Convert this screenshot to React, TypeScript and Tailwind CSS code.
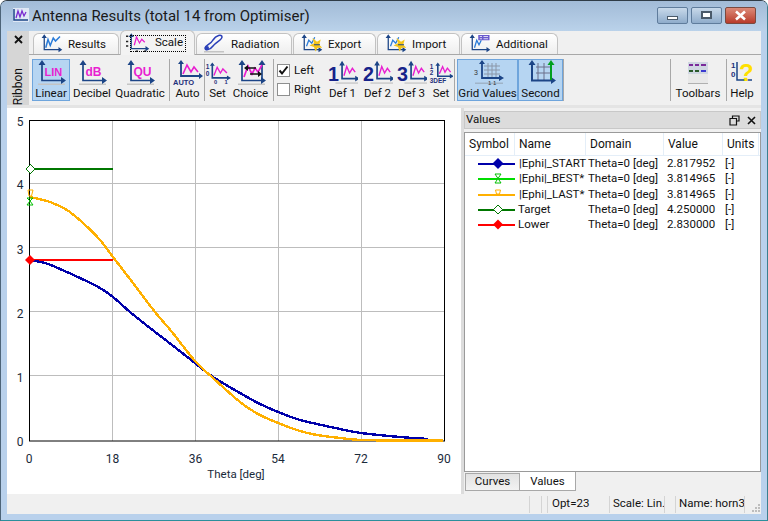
import React from "react";

const NAVY = "#1c4587";
const PINK = "#e81fd0";

function Axes({ children, shadow = true, right }: { children?: React.ReactNode; shadow?: boolean; right?: string }) {
  return (
    <>
      {shadow && <rect x="3" y="23.5" width="27" height="1.5" fill="#c4c4c4" />}
      <path d="M7 2.5V20.5H27" fill="none" stroke={NAVY} strokeWidth="1.7" />
      <path d="M7 0L3.5 5H10.5ZM31 20.5L26 17V24Z" fill={NAVY} />
      {right && (
        <>
          <path d="M27 3V20" stroke={right} strokeWidth="1.7" />
          <path d="M27 0L23.5 5H30.5Z" fill={right} />
        </>
      )}
      {children}
    </>
  );
}

function Ico({ w = 32, h = 26, vb = "0 0 32 26", children }: { w?: number; h?: number; vb?: string; children?: React.ReactNode }) {
  return (
    <svg width={w} height={h} viewBox={vb} className="block shrink-0">
      {children}
    </svg>
  );
}

const Wave = ({ c = PINK }: { c?: string }) => (
  <path d="M9 17L13 6L17 14L20 8L23 12L27 5" fill="none" stroke={c} strokeWidth="1.7" />
);

function TextIcon({ label, size = 11 }: { label: string; size?: number }) {
  return (
    <Ico>
      <Axes />
      <text x="9.5" y="15.5" fontSize={size} fontWeight="700" fill={PINK} fontFamily="Liberation Sans, sans-serif">
        {label}
      </text>
    </Ico>
  );
}

function DefIcon({ n }: { n: string }) {
  return (
    <Ico w={30} h={26} vb="-2 0 32 26">
      <g transform="translate(6 0)">
        <path d="M7 2.5V19H22" fill="none" stroke={NAVY} strokeWidth="1.8" />
        <path d="M7 0L4 5H10ZM26 19L21 16V22Z" fill={NAVY} />
        <path d="M9 16L12 6L15 13L18 8L21 12" fill="none" stroke={PINK} strokeWidth="1.5" />
      </g>
      <rect x="6" y="23" width="24" height="1.5" fill="#c8c8c8" />
      <text x="-2" y="22" fontSize="21" fontWeight="700" fill="#16238a" fontFamily="Liberation Sans, sans-serif">
        {n}
      </text>
    </Ico>
  );
}

function TabIcon({ kind }: { kind: string }) {
  if (kind === "radiation") {
    return (
      <Ico w={24} h={20} vb="0 0 24 20">
        <rect x="2" y="17" width="20" height="1.5" fill="#c4c4c4" />
        <path d="M3 14C3 17 8 16 11 12C14 8 20 6 20 3C20 0 14 1 11 6C9 10 4 11 3 14Z" fill="none" stroke="#2a3fb8" strokeWidth="1.5" />
        <circle cx="5" cy="14" r="2" fill="#2a3fb8" />
      </Ico>
    );
  }
  return (
    <Ico w={24} h={20} vb="0 0 32 26">
      <Axes shadow={false}>
        {kind === "results" && <path d="M9 18L12 7L15 15L19 5L22 9L28 3" fill="none" stroke="#2a7bd8" strokeWidth="2" />}
        {kind === "scale" && (
          <>
            <path d="M11 16L14 5L18 13L21 8L25 12" fill="none" stroke={PINK} strokeWidth="1.7" />
            <path d="M0 4H3M0 11H3M0 17H3M13 24H16M24 24H27" stroke="#222" strokeWidth="2" />
          </>
        )}
        {(kind === "export" || kind === "import") && (
          <>
            <path d="M10 16L13 8L17 12L21 4" fill="none" stroke="#2a7bd8" strokeWidth="1.7" />
            <path d="M18 5L24 10L29 7L27 14L31 18L25 18L22 23L20 17L14 15L20 12Z" fill="#f5c518" />
            <path d="M20 14H28" stroke={NAVY} strokeWidth="1.6" />
          </>
        )}
        {kind === "additional" && (
          <>
            <path d="M10 18L13 8L16 14L19 8" fill="none" stroke="#2a7bd8" strokeWidth="1.7" />
            <rect x="15" y="1" width="15" height="7" fill="#6a5acd" />
            <path d="M17 3H20M17 6H20M22 3H28M22 6H28" stroke="#fff" strokeWidth="1" />
          </>
        )}
      </Axes>
    </Ico>
  );
}

function Tab({ label, kind, className, active }: { label: string; kind: string; className: string; active?: boolean }) {
  return (
    <div
      className={`${className} flex items-center rounded-t-[6px] border border-[#c2c2c2] pl-[5px] ${
        active
          ? "h-[25px] -mb-px mr-px border-b-0 bg-[#f3f3f3] relative z-10"
          : "h-[21px] mr-px border-b-0 bg-gradient-to-b from-white to-[#eeeeee]"
      }`}
    >
      <TabIcon kind={kind} />
      {active ? (
        <span className="ml-[4px] flex h-[17px] items-center border border-dotted border-black pl-[24px] pr-[2px] -translate-x-[24px] -mr-[24px]">
          {label}
        </span>
      ) : (
        <span className="ml-[5px] pt-[2px]">{label}</span>
      )}
    </div>
  );
}

function Btn({ label, className, active, children }: { label: string; className: string; active?: boolean; children?: React.ReactNode }) {
  return (
    <div
      className={`${className} flex h-[42px] shrink-0 flex-col items-center justify-between border pb-[1px] ${
        active ? "border-[#6fa5dc] bg-[#b6d5f2]" : "border-transparent"
      }`}
    >
      <div className="flex h-[26px] items-start justify-center">{children}</div>
      <span className="whitespace-nowrap leading-[14px]">{label}</span>
    </div>
  );
}

const Sep = ({ className }: { className: string }) => (
  <div className={`${className} h-[42px] w-[2px] shrink-0 border-l border-[#a8a8a8] bg-[#f0f0f0]`} />
);

function Check({ label, checked }: { label: string; checked?: boolean }) {
  return (
    <div className="flex h-[19px] items-center">
      <div className="flex h-[13px] w-[13px] items-center justify-center border border-[#8e8f8f] bg-white">
        {checked && (
          <svg width="11" height="11" viewBox="0 0 11 11">
            <path d="M1.5 5.5L4 8.5L9.5 1.5" fill="none" stroke="#111" strokeWidth="2" />
          </svg>
        )}
      </div>
      <span className="ml-[4px]">{label}</span>
    </div>
  );
}

const blue: [number, number][] = [[29,260],[45,263],[60,269],[80,278],[100,288],[113,297],[130,312],[150,328],[172,345],[195,363],[213,377],[240,393],[258,403],[278,412],[300,420],[317,424],[340,429],[361,433],[400,437],[428,439]];
const yellow: [number, number][] = [[30,197],[50,202],[67,210],[83,223],[100,240],[113,257],[133,283],[155,312],[172,332],[195,361],[213,378],[240,402],[258,414],[278,423],[300,431],[317,435],[340,438],[361,440],[400,440.5],[443,440.5]];

function smooth(p: [number, number][]) {
  let d = `M${p[0][0]} ${p[0][1]}`;
  for (let i = 0; i < p.length - 1; i++) {
    const a = p[Math.max(i - 1, 0)];
    const b = p[i];
    const c = p[i + 1];
    const e = p[Math.min(i + 2, p.length - 1)];
    d += `C${b[0] + (c[0] - a[0]) / 6} ${b[1] + (c[1] - a[1]) / 6} ${c[0] - (e[0] - b[0]) / 6} ${c[1] - (e[1] - b[1]) / 6} ${c[0]} ${c[1]}`;
  }
  return d;
}

const SANS = "Roboto, sans-serif";

function Chart() {
  const t = { fontSize: 12, fill: "#1a2a3a", fontFamily: SANS, textAnchor: "middle" as const };
  return (
    <svg width="454" height="386" viewBox="7 108 454 386" className="block">
      {[112.5, 195.5, 278.5, 361.5].map((x) => (
        <path key={x} d={`M${x} 120V441`} stroke="#bdbdbd" strokeWidth="1" />
      ))}
      {[183.5, 247.5, 311.5, 375.5].map((y) => (
        <path key={y} d={`M29 ${y}H444`} stroke="#bdbdbd" strokeWidth="1" />
      ))}
      <rect x="29.5" y="120.5" width="415" height="320.5" fill="none" stroke="#000" strokeWidth="1" />
      <path d="M30 169H113" stroke="#007700" strokeWidth="2" shapeRendering="crispEdges" />
      <path d="M30 260H113" stroke="#ff0000" strokeWidth="2" shapeRendering="crispEdges" />
      <path d={smooth(blue)} fill="none" stroke="#0000aa" strokeWidth="2.4" shapeRendering="crispEdges" />
      <path d={smooth(yellow)} fill="none" stroke="#ffb000" strokeWidth="2.4" shapeRendering="crispEdges" />
      <path d="M30.5 164.5L35 169L30.5 173.5L26 169Z" fill="#fff" stroke="#007700" shapeRendering="crispEdges" />
      <path d="M30 255L35 260L30 265L25 260Z" fill="#ff0000" />
      <path d="M27 198L33 198L30 201L33 205L27 205L30 201Z" fill="none" stroke="#00c000" />
      <path d="M28 190L33 190L31.5 196L29 196Z" fill="none" stroke="#ffb000" />
      {["5", "4", "3", "2", "1", "0"].map((s, i) => (
        <text key={s} x="20" y={126 + i * 64 - (i === 1 ? 1 : 0)} {...t}>
          {s}
        </text>
      ))}
      {[
        ["0", 29],
        ["18", 112.5],
        ["36", 195.5],
        ["54", 278],
        ["72", 361],
        ["90", 444],
      ].map(([s, x]) => (
        <text key={s} x={x} y="463" {...t}>
          {s}
        </text>
      ))}
      <text x="236" y="478" {...t} fontSize={11.5}>
        Theta [deg]
      </text>
    </svg>
  );
}

function Sym({ color, marker }: { color: string; marker: React.ReactNode }) {
  return (
    <svg width="37" height="15" viewBox="0 0 37 15" className="block shrink-0 ml-[13px]">
      <path d="M0 7.5H37" stroke={color} strokeWidth="2" shapeRendering="crispEdges" />
      {marker}
    </svg>
  );
}

const rows: { c: string; m: React.ReactNode; name: string; nameClass: string; val: string }[] = [
  { c: "#0000aa", m: <path d="M20 2L25.5 7.5L20 13L14.5 7.5Z" fill="#0000aa" />, name: "|Ephi|_START", nameClass: "w-[70px] pl-[4px]", val: "2.817952" },
  { c: "#00dd00", m: <path d="M17 3H23L20 7.5L23 12H17L20 7.5Z" fill="#fff" stroke="#00c000" />, name: "|Ephi|_BEST*", nameClass: "w-[70px] pl-[4px]", val: "3.814965" },
  { c: "#ffb000", m: <path d="M17.5 3L22.5 3L21.5 7H18.5Z" fill="#fff" stroke="#ffb000" />, name: "|Ephi|_LAST*", nameClass: "w-[70px] pl-[4px]", val: "3.814965" },
  { c: "#007700", m: <path d="M20 3L24.5 7.5L20 12L15.5 7.5Z" fill="#fff" stroke="#007700" />, name: "Target", nameClass: "w-[70px] pl-[3px]", val: "4.250000" },
  { c: "#ff0000", m: <path d="M20 2.5L25 7.5L20 12.5L15 7.5Z" fill="#ff0000" />, name: "Lower", nameClass: "w-[70px] pl-[3px]", val: "2.830000" },
];

const StatusSep = ({ className }: { className: string }) => <div className={`${className} h-[17px] w-px shrink-0 bg-[#d4d4d4]`} />;

export default function App() {
  return (
    <div
      className="flex h-[521px] w-[768px] flex-col overflow-hidden rounded-t-[7px] border border-b-[#2b8f9c] border-l-[#4d6478] border-r-[#3b7f8f] border-t-[#2f3b46] bg-[#b9d1ec] text-[11.5px] text-[#111]"
      style={{ fontFamily: SANS }}
    >
      {/* Title bar */}
      <div className="flex h-[30px] shrink-0 items-center bg-gradient-to-b from-[#a2bbd7] to-[#bad2ea] pl-[12px] pr-[11px]">
        <svg width="16" height="14" viewBox="0 0 16 14" className="block shrink-0 -translate-y-[1px]">
          <rect width="16" height="14" fill="#dfe8f5" />
          <path d="M1 1V12H15" fill="none" stroke={NAVY} strokeWidth="1.5" />
          <path d="M3 10L5 3L7 9L9 3L11 8L13 4" fill="none" stroke="#7a2bd0" strokeWidth="1.3" />
        </svg>
        <span className="ml-[3px] text-[15px] leading-[20px] text-[#1a1a1a]">Antenna Results (total 14 from Optimiser)</span>
        <div className="ml-auto flex gap-[3px] -translate-y-[1px]">
          <div className="flex h-[17px] w-[31px] items-end justify-center rounded-[2px] border border-[#5f7c9c] bg-gradient-to-b from-[#c8d9ea] to-[#8faccb] pb-[3px]">
            <div className="h-[4px] w-[11px] border border-[#4a5a6a] bg-white" />
          </div>
          <div className="flex h-[17px] w-[31px] items-center justify-center rounded-[2px] border border-[#5f7c9c] bg-gradient-to-b from-[#c8d9ea] to-[#8faccb]">
            <div className="h-[8px] w-[11px] border-2 border-[#4a5a6a] bg-white" />
          </div>
          <div className="flex h-[17px] w-[31px] items-center justify-center rounded-[2px] border border-[#7a4a40] bg-gradient-to-b from-[#dc8a78] to-[#b8392a]">
            <svg width="13" height="11" viewBox="0 0 13 11">
              <path d="M2 1.5L11 9.5M11 1.5L2 9.5" stroke="#fff" strokeWidth="2.6" />
            </svg>
          </div>
        </div>
      </div>

      {/* Client area */}
      <div className="ml-[6px] mr-[6px] flex h-[483px] shrink-0 flex-col bg-[#f0f0f0]">
        {/* Ribbon */}
        <div className="flex h-[74px] shrink-0">
          <div className="relative flex w-[22px] shrink-0 flex-col items-center bg-[#d6d6d6]">
            <svg width="9" height="9" viewBox="0 0 9 9" className="mt-[4px] block">
              <path d="M1 1L8 8M8 1L1 8" stroke="#111" strokeWidth="1.8" />
            </svg>
            <span className="absolute bottom-[0px] left-[3px] origin-center text-[12px] [writing-mode:vertical-rl] rotate-180 leading-[16px]">Ribbon</span>
          </div>
          <div className="flex min-w-0 flex-1 flex-col">
            <div className="relative flex h-[24px] shrink-0 items-end border-b border-[#a8a8a8] pl-[4px]">
              <Tab label="Results" kind="results" className="w-[86px] mr-px" />
              <Tab label="Scale" kind="scale" className="w-[75px]" active />
              <Tab label="Radiation" kind="radiation" className="w-[96px]" />
              <Tab label="Export" kind="export" className="w-[83px]" />
              <Tab label="Import" kind="import" className="w-[83px]" />
              <Tab label="Additional" kind="additional" className="w-[97px]" />
            </div>
            <div className="flex flex-1 items-start pl-[3px] pt-[4px]">
              <Btn label="Linear" className="w-[38px]" active>
                <TextIcon label="LIN" size={11} />
              </Btn>
              <Btn label="Decibel" className="ml-[2px] w-[40px]">
                <TextIcon label="dB" size={12} />
              </Btn>
              <Btn label="Quadratic" className="ml-[2px] w-[52px]">
                <TextIcon label="QU" size={12} />
              </Btn>
              <Sep className="ml-[3px]" />
              <Btn label="Auto" className="ml-[1px] w-[31px]">
                <Ico>
                  <path d="M9 3V16H29" fill="none" stroke={NAVY} strokeWidth="1.8" />
                  <path d="M9 0L6 4H12ZM31 16L27 13V19Z" fill={NAVY} />
                  <path d="M11 14L15 5L19 12L22 7L26 12" fill="none" stroke={PINK} strokeWidth="1.6" />
                  <text x="1" y="25" fontSize="7.5" fontWeight="700" fill="#1f2f7a" fontFamily="Liberation Sans, sans-serif">AUTO</text>
                </Ico>
              </Btn>
              <Sep className="ml-[1px]" />
              <Btn label="Set" className="ml-[0px] w-[23px]">
                <Ico w={26} h={26} vb="0 0 32 26">
                  <path d="M9 2V19H29" fill="none" stroke={NAVY} strokeWidth="2" />
                  <path d="M9 0L6 4H12ZM32 19L27 16V22Z" fill={NAVY} />
                  <path d="M11 16L15 6L19 13L22 8L27 13" fill="none" stroke={PINK} strokeWidth="1.7" />
                  <text x="1" y="8" fontSize="8" fontWeight="700" fill="#1f2f7a" fontFamily="Liberation Sans, sans-serif">1</text>
                  <text x="1" y="17" fontSize="8" fontWeight="700" fill="#1f2f7a" fontFamily="Liberation Sans, sans-serif">0</text>
                  <text x="11" y="26" fontSize="7" fontWeight="700" fill="#1f2f7a" fontFamily="Liberation Sans, sans-serif">0</text>
                  <text x="24" y="26" fontSize="7" fontWeight="700" fill="#1f2f7a" fontFamily="Liberation Sans, sans-serif">1</text>
                </Ico>
              </Btn>
              <Btn label="Choice" className="ml-[2px] w-[39px]">
                <Ico>
                  <Axes right={NAVY}>
                    <Wave />
                    <path d="M11 8H21M15 14H25" stroke="#111" strokeWidth="1.6" />
                    <path d="M9 8L13 5V11ZM27 14L23 11V17Z" fill="#111" />
                  </Axes>
                </Ico>
              </Btn>
              <Sep className="ml-[3px]" />
              <div className="ml-[2px] flex w-[50px] shrink-0 flex-col pt-[2px]">
                <Check label="Left" checked />
                <Check label="Right" />
              </div>
              <Btn label="Def 1" className="w-[31px]">
                <DefIcon n="1" />
              </Btn>
              <Btn label="Def 2" className="ml-[4px] w-[31px]">
                <DefIcon n="2" />
              </Btn>
              <Btn label="Def 3" className="ml-[3px] w-[31px]">
                <DefIcon n="3" />
              </Btn>
              <Btn label="Set" className="ml-[3px] w-[22px]">
                <Ico w={24} h={26} vb="0 0 30 26">
                  <path d="M11 2V17H28" fill="none" stroke={NAVY} strokeWidth="2" />
                  <path d="M11 0L8 4H14ZM31 17L26 14V20Z" fill={NAVY} />
                  <path d="M13 14L17 5L20 12L23 7L27 12" fill="none" stroke={PINK} strokeWidth="1.7" />
                  <text x="1" y="8" fontSize="8" fontWeight="700" fill="#1f2f7a" fontFamily="Liberation Sans, sans-serif">1</text>
                  <text x="1" y="16" fontSize="8" fontWeight="700" fill="#1f2f7a" fontFamily="Liberation Sans, sans-serif">2</text>
                  <text x="1" y="25" fontSize="8" fontWeight="700" fill="#1f2f7a" fontFamily="Liberation Sans, sans-serif">3DEF</text>
                </Ico>
              </Btn>
              <Sep className="ml-[2px]" />
              <Btn label="Grid Values" className="ml-[1px] w-[61px]" active>
                <Ico w={36} h={26} vb="0 0 36 26">
                  <rect x="5" y="22.5" width="28" height="1.5" fill="#9fb4c8" />
                  <path d="M14 6H30M14 10H30M14 14H30M18 3V19M22 3V19M26 3V19" stroke="#8a96a8" strokeWidth="1" />
                  <path d="M12 1V18H31" fill="none" stroke={NAVY} strokeWidth="1.8" />
                  <path d="M12 0L9 4H15ZM34 18L29 15V21Z" fill={NAVY} />
                  <text x="4" y="15" fontSize="7" fill="#333" fontFamily="Liberation Sans, sans-serif">3</text>
                  <text x="18" y="25" fontSize="6" fill="#333" fontFamily="Liberation Sans, sans-serif">1 1</text>
                </Ico>
              </Btn>
              <Btn label="Second" className="w-[45px]" active>
                <Ico>
                  <path d="M11 7H27M11 13H27M13 3V20M19 3V20" stroke="#6a6f8a" strokeWidth="1" />
                  <path d="M7 2.5V20.5H27" fill="none" stroke={NAVY} strokeWidth="2" />
                  <path d="M7 0L3.5 5H10.5ZM31 20.5L26 17V24Z" fill={NAVY} />
                  <path d="M26 4V20" stroke="#00a020" strokeWidth="2" />
                  <path d="M26 0L22.5 5H29.5Z" fill="#00a020" />
                </Ico>
              </Btn>
              <Sep className="" />
              <Sep className="ml-[105px]" />
              <Btn label="Toolbars" className="ml-[1px] w-[50px]">
                <svg width="24" height="26" viewBox="0 0 24 26" className="block">
                  <rect x="2" y="3" width="20" height="21" fill="#e8e8e8" />
                  <rect x="2" y="2" width="20" height="6" fill="#cfd6e2" />
                  <rect x="2" y="8" width="20" height="6" fill="#cfd6e2" />
                  <path d="M3 5H7M9 5H13M15 5H20" stroke="#7a2a9a" strokeWidth="2" />
                  <path d="M3 11H7M9 11H13" stroke="#2a5a2a" strokeWidth="2" />
                  <path d="M15 11H20" stroke="#3a3ad0" strokeWidth="2" />
                  <rect x="2" y="23" width="20" height="1" fill="#b0b0b0" />
                </svg>
              </Btn>
              <Sep className="ml-[3px]" />
              <Btn label="Help" className="ml-[1px] w-[26px]">
                <svg width="24" height="26" viewBox="0 0 24 26" className="block">
                  <text x="1" y="8" fontSize="8" fontWeight="700" fill="#1f2f7a" fontFamily="Liberation Sans, sans-serif">1</text>
                  <text x="1" y="17" fontSize="8" fontWeight="700" fill="#1f2f7a" fontFamily="Liberation Sans, sans-serif">0</text>
                  <path d="M7 2V20H22" fill="none" stroke={NAVY} strokeWidth="1.5" />
                  <text x="9" y="21" fontSize="24" fontWeight="700" fill="#ffe000" fontFamily="Liberation Sans, sans-serif">?</text>
                </svg>
              </Btn>
            </div>
          </div>
        </div>
        <div className="h-[3px] shrink-0 bg-[#e4e4e4]" />

        {/* Main */}
        <div className="flex h-[386px] shrink-0">
          <div className="h-full w-[454px] shrink-0 bg-white">
            <Chart />
          </div>
          <div className="w-[3px] shrink-0 bg-[#dcdcdc]" />
          <div className="flex min-w-0 flex-1 flex-col bg-[#f0f0f0]">
            <div className="mt-[3px] flex h-[18px] shrink-0 items-center border border-[#c8c8c8] bg-[#dcdcdc] pl-[1px]">
              <span>Values</span>
              <svg width="11" height="11" viewBox="0 0 11 11" className="ml-auto block">
                <path d="M3.5 3V1H10V6H7.5M1 3.5H7.5V10H1Z" fill="none" stroke="#111" strokeWidth="1.2" />
              </svg>
              <svg width="9" height="9" viewBox="0 0 9 9" className="ml-[7px] mr-[4px] block">
                <path d="M1 1L8 8M8 1L1 8" stroke="#111" strokeWidth="1.6" />
              </svg>
            </div>
            <div className="mt-[3px] h-[340px] shrink-0 border border-[#9a9a9a] bg-white">
              <div className="flex h-[23px] items-center border-b border-[#e4eef8] text-[12px]">
                <div className="w-[50px] border-r border-[#e4eef8] pl-[4px] leading-[22px]">Symbol</div>
                <div className="w-[71px] border-r border-[#e4eef8] pl-[4px] leading-[22px]">Name</div>
                <div className="w-[78px] border-r border-[#e4eef8] pl-[4px] leading-[22px]">Domain</div>
                <div className="w-[59px] border-r border-[#e4eef8] pl-[4px] leading-[22px]">Value</div>
                <div className="w-[36px] border-r border-[#e4eef8] pl-[4px] leading-[22px]">Units</div>
              </div>
              {rows.map((r) => (
                <div key={r.name} className="flex h-[15.25px] items-center whitespace-nowrap">
                  <Sym color={r.c} marker={r.m} />
                  <div className={r.nameClass}>{r.name}</div>
                  <div className="ml-[3px] w-[79px]">Theta=0 [deg]</div>
                  <div className="w-[58px]">{r.val}</div>
                  <div>[-]</div>
                </div>
              ))}
            </div>
            <div className="mt-px flex h-[20px] shrink-0 pl-[1px]">
              <div className="flex h-[18px] w-[55px] items-center justify-center border border-[#a8a8a8] bg-gradient-to-b from-[#e2e2e2] to-[#f2f2f2]">Curves</div>
              <div className="flex h-[19px] w-[56px] items-center justify-center border border-[#a8a8a8] border-l-0 border-t-0 bg-white -mt-px pt-[1px]">Values</div>
            </div>
          </div>
        </div>

        {/* Status */}
        <div className="flex h-[20px] shrink-0 items-center whitespace-nowrap pl-[522px]">
          <StatusSep className="" />
          <StatusSep className="ml-[11px]" />
          <StatusSep className="ml-[5px]" />
          <span className="ml-[4px] w-[57px]">Opt=23</span>
          <StatusSep className="" />
          <span className="ml-[3px] w-[51px]">Scale: Lin.</span>
          <StatusSep className="" />
          <StatusSep className="ml-[10px]" />
          <span className="ml-[3px] w-[65px]">Name: horn3</span>
          <StatusSep className="" />
          <svg width="9" height="9" viewBox="0 0 9 9" className="ml-[6px] mt-[6px] block">
            <path d="M7 1H9V3H7ZM4 4H6V6H4ZM7 4H9V6H7ZM1 7H3V9H1ZM4 7H6V9H4ZM7 7H9V9H7Z" fill="#bdbdbd" />
          </svg>
        </div>
      </div>
    </div>
  );
}
